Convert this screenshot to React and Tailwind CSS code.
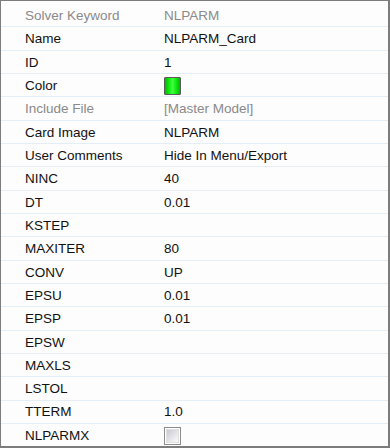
import React from "react";

const rows = [
  { label: "Solver Keyword", value: "NLPARM", dim: true },
  { label: "Name", value: "NLPARM_Card" },
  { label: "ID", value: "1" },
  { label: "Color", type: "color" },
  { label: "Include File", value: "[Master Model]", dim: true },
  { label: "Card Image", value: "NLPARM" },
  { label: "User Comments", value: "Hide In Menu/Export" },
  { label: "NINC", value: "40" },
  { label: "DT", value: "0.01" },
  { label: "KSTEP", value: "" },
  { label: "MAXITER", value: "80" },
  { label: "CONV", value: "UP" },
  { label: "EPSU", value: "0.01" },
  { label: "EPSP", value: "0.01" },
  { label: "EPSW", value: "" },
  { label: "MAXLS", value: "" },
  { label: "LSTOL", value: "" },
  { label: "TTERM", value: "1.0" },
  { label: "NLPARMX", type: "check" },
];

function Swatch() {
  return (
    <div className="w-[17px] h-[18px] border border-[#5a5a5a] rounded-[1px] bg-[linear-gradient(90deg,#00b800_0%,#10e810_25%,#3cff3c_50%,#10e810_75%,#00b800_100%)]" />
  );
}

function Check() {
  return (
    <div className="w-[17px] h-[18px] border border-[#8c8c8c] bg-white p-[1px]">
      <div className="w-full h-full bg-[linear-gradient(135deg,#c8c8d0_0%,#e2e2e8_50%,#fbfbfb_100%)] border border-[#e0e0e0]" />
    </div>
  );
}

export default function App() {
  return (
    <div
      className="w-[390px] h-[448px] bg-[#fdfdfd] border-t border-l border-r-2 border-b-2 border-[#7c7c7c] pt-[3px] overflow-hidden"
      style={{ fontFamily: '"Liberation Sans", Arial, sans-serif' }}
    >
      {rows.map((r, i) => (
        <div
          key={i}
          className="flex items-center h-[23.33px] border-b border-[#e4eef6] text-[13.5px] leading-none"
        >
          <div
            className={`pl-[24px] w-[163px] shrink-0 pt-[1px] ${
              r.dim ? "text-[#8a8a8a]" : "text-[#111]"
            }`}
          >
            {r.label}
          </div>
          <div
            className={`pt-[1px] ${r.dim ? "text-[#8a8a8a]" : "text-[#111]"}`}
          >
            {r.type === "color" ? (
              <Swatch />
            ) : r.type === "check" ? (
              <Check />
            ) : (
              r.value
            )}
          </div>
        </div>
      ))}
    </div>
  );
}
